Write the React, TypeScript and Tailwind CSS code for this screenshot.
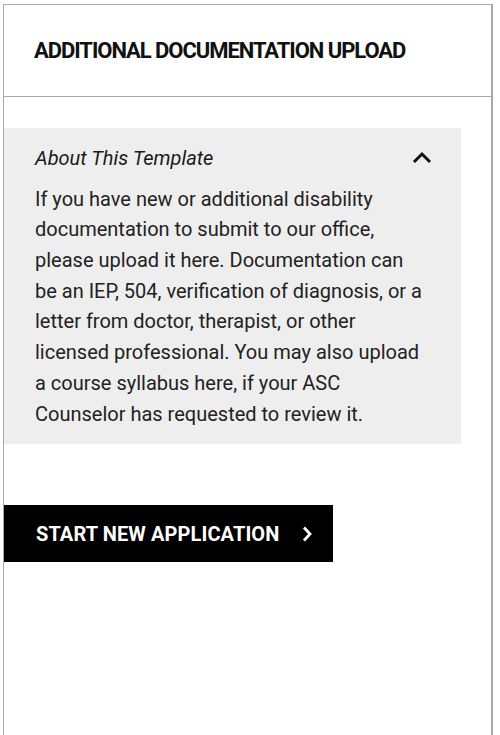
export default function App() {
  return (
    <div className="w-[500px] h-[735px] overflow-hidden bg-white pt-[4px] pl-[3px] font-['Roboto',sans-serif]">
      <div className="w-[490px] min-h-[760px] border border-[#a8a8a8] border-r-2 border-b-0 bg-white">
        {/* Header */}
        <div className="h-[92px] flex items-center pl-[30px] border-b border-[#a8a8a8]">
          <h1 className="text-[22px] font-bold uppercase tracking-[-1.05px] text-[#111]">
            Additional Documentation Upload
          </h1>
        </div>

        {/* About panel */}
        <div className="mt-[31px] mr-[30px] bg-[#eeeeee] px-[31px] pt-[15px] pb-[15px]">
          <div className="flex items-center justify-between">
            <span className="text-[20px] leading-[30.6px] italic text-[#1a1a1a]">
              About This Template
            </span>
            <svg width="20" height="14" viewBox="0 0 20 14" className="mr-[-2px]">
              <path d="M2 11 L10 3 L18 11" fill="none" stroke="#111" strokeWidth="3" />
            </svg>
          </div>
          <p className="mt-[10px] text-[20px] leading-[30.7px] text-[#222]">
            If you have new or additional disability documentation to submit to our office, please upload it here. Documentation can be an IEP, 504, verification of diagnosis, or a letter from doctor, therapist, or other licensed professional. You may also upload a course syllabus here, if your ASC Counselor has requested to review it.
          </p>
        </div>

        {/* Button */}
        <button className="mt-[61px] w-[329px] h-[57px] bg-black flex items-center pl-[32px] gap-[22px]">
          <span className="text-[20px] font-bold uppercase tracking-[0.1px] text-white">
            Start New Application
          </span>
          <svg width="12" height="18" viewBox="0 0 12 18">
            <path d="M3 2.5 L9 9 L3 15.5" fill="none" stroke="#fff" strokeWidth="2.8" />
          </svg>
        </button>
      </div>
    </div>
  );
}
